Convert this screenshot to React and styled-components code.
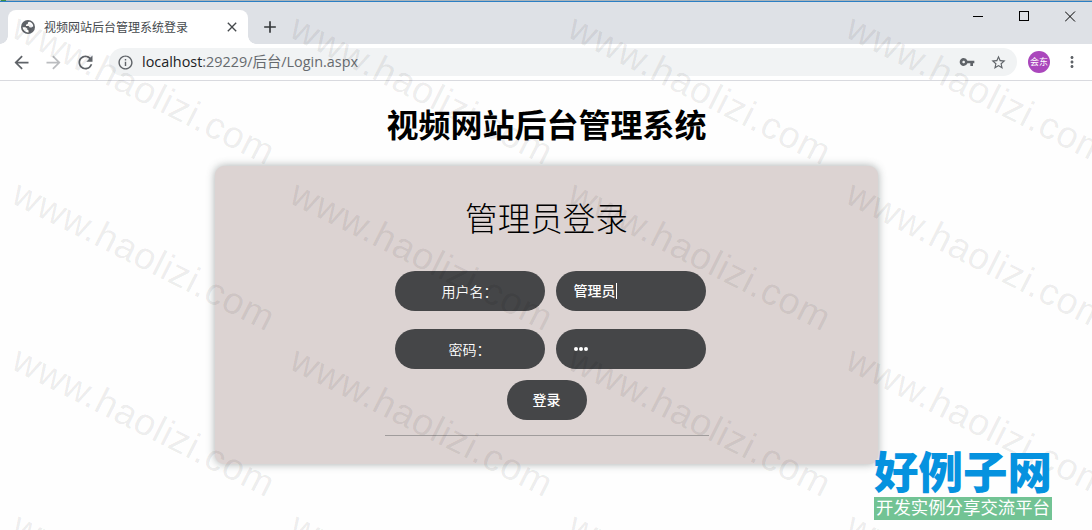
import styled, { createGlobalStyle } from "styled-components";
import {
  MdClose,
  MdAdd,
  MdArrowBack,
  MdArrowForward,
  MdRefresh,
  MdInfoOutline,
  MdVpnKey,
  MdStarBorder,
  MdMoreVert,
} from "react-icons/md";

const GlobalStyle = createGlobalStyle`
  * {
    box-sizing: border-box;
  }

  body {
    margin: 0;
    background: #fefefe;
    font-family: "Noto Sans CJK SC", sans-serif;
  }

  svg {
    display: block;
    flex: none;
  }
`;

const Window = styled.div`
  position: relative;
  width: 1092px;
  height: 530px;
  overflow: hidden;
  display: flex;
  flex-direction: column;
`;

const TopEdge = styled.div`
  height: 2px;
  flex: none;
  border-top: 1px solid #a9b3ba;
  background: #2b7fc4;

  &::before {
    content: "";
    display: block;
    width: 5px;
    height: 1px;
    margin: -1px 0 0 1px;
    background: #3f9142;
  }
`;

const TabStrip = styled.div`
  display: flex;
  flex: none;
  height: 42px;
  padding: 8px 0 0 8px;
  background: #dee1e6;
`;

const Tab = styled.div`
  position: relative;
  display: flex;
  align-items: center;
  width: 240px;
  height: 34px;
  padding: 0 8px 0 13px;
  border-radius: 8px 8px 0 0;
  background: #fff;
  color: #45494d;
  font-size: 12px;

  span {
    flex: 1;
    margin-left: 9px;
    line-height: 16px;
  }

  &::before,
  &::after {
    content: "";
    position: absolute;
    bottom: 0;
    width: 8px;
    height: 8px;
  }

  &::before {
    left: -8px;
    background: radial-gradient(circle at 0 0, transparent 7.5px, #fff 8px);
  }

  &::after {
    right: -8px;
    background: radial-gradient(circle at 100% 0, transparent 7.5px, #fff 8px);
  }
`;

const NewTab = styled.div`
  width: 20px;
  margin: 7px 0 0 12px;
  color: #35383b;
`;

const Controls = styled.div`
  display: flex;
  gap: 35px;
  margin: 1px 16px 0 auto;
`;

const Toolbar = styled.div`
  display: flex;
  flex: none;
  align-items: center;
  height: 37px;
  padding: 0 11px 0 11px;
  border-bottom: 1px solid #d9dadf;
  background: #fff;
  color: #5f6368;
`;

const NavIcons = styled.div`
  display: flex;
  gap: 11px;

  .disabled {
    color: #bbbdc0;
  }
`;

const AddressBar = styled.div`
  display: flex;
  align-items: center;
  flex: 1;
  height: 28px;
  margin-left: 13px;
  padding: 0 10px 0 8px;
  border-radius: 14px;
  background: #f1f3f4;
`;

const Url = styled.div`
  flex: 1;
  margin-left: 8px;
  font-family: "Open Sans", "Noto Sans CJK SC", sans-serif;
  font-size: 14.4px;
  line-height: 20px;
  color: #666a6e;

  b {
    font-weight: 400;
    color: #202124;
  }
`;

const BarIcons = styled.div`
  display: flex;
  align-items: center;
  gap: 15px;
`;

const Avatar = styled.div`
  width: 22px;
  height: 22px;
  margin: 0 13px 0 11px;
  border-radius: 50%;
  background: #aa47bc;
  color: #fff;
  font-size: 9px;
  line-height: 22px;
  text-align: center;
`;

const Page = styled.main`
  display: flex;
  flex-direction: column;
  align-items: center;
  padding-left: 1px;
`;

const PageTitle = styled.h1`
  margin: 20px 0 0;
  font-size: 32px;
  line-height: 44px;
  color: #000;
`;

const Panel = styled.section`
  display: flex;
  flex-direction: column;
  align-items: center;
  width: 663px;
  height: 298px;
  margin-top: 21px;
  padding-top: 28px;
  border-radius: 9px;
  background: #dcd3d2;
  box-shadow: 0 0 8px rgba(60, 70, 70, 0.45);
`;

const PanelTitle = styled.h2`
  margin: 0;
  font-size: 32.6px;
  font-weight: 300;
  line-height: 46px;
  color: #000;
`;

const Fields = styled.div`
  display: grid;
  grid-template-columns: 150px 150px;
  gap: 18px 11px;
  margin: 31px 0 0 7px;
`;

const Pill = styled.div`
  display: flex;
  align-items: center;
  justify-content: center;
  height: 40px;
  padding-bottom: 2px;
  border-radius: 20px;
  background: #454648;
  color: #fff;
  font-size: 14px;
`;

const Label = styled(Pill)`
  padding-bottom: 0;
  font-weight: 350;
`;

const Field = styled(Pill)`
  justify-content: flex-start;
  padding-left: 18px;
  font-weight: 500;
`;

const Caret = styled.i`
  width: 1px;
  height: 16px;
  margin-top: 2px;
  background: #fff;
`;

const Dot = styled.i`
  width: 4px;
  height: 4px;
  margin: 2px 1px 0 0;
  border-radius: 50%;
  background: #fff;
`;

const LoginButton = styled(Pill).attrs({ as: "button" })`
  width: 80px;
  margin-top: 11px;
  padding: 0 0 2px;
  border: 0;
  font-family: inherit;
  font-weight: 500;
`;

const Line = styled.hr`
  width: 324px;
  height: 1px;
  margin: 15px 0 0;
  border: 0;
  background: #a09c9c;
`;

// 水印铺满整个窗口，盖在所有内容上面
const Watermarks = styled.div`
  position: absolute;
  top: 0;
  left: 10px;
  display: grid;
  grid-template-columns: repeat(4, 278px);
  grid-auto-rows: 166px;
  pointer-events: none;
`;

const Mark = styled.span`
  width: 0;
  height: 34px;
  font-family: "Liberation Sans", Arial, sans-serif;
  font-size: 37.5px;
  letter-spacing: 0.75px;
  line-height: 34px;
  white-space: nowrap;
  color: rgba(0, 0, 0, 0.075);
  transform: translateY(6px) rotate(26.8deg);
  transform-origin: 0 29px;
`;

const SiteLogo = styled.div`
  position: absolute;
  top: 448px;
  left: 874px;
  width: 178px;

  strong {
    display: block;
    height: 49px;
    font-size: 44.5px;
    font-weight: 900;
    line-height: 44px;
    white-space: nowrap;
    color: #0592df;
  }

  span {
    display: block;
    height: 23px;
    background: #72c394;
    color: #fff;
    font-size: 17.4px;
    line-height: 20px;
    text-align: center;
    white-space: nowrap;
  }
`;

function GlobeIcon() {
  return (
    <svg width="14" height="14" viewBox="0 0 14 14">
      <circle cx="7" cy="7" r="7" fill="#5f6368" />
      <path
        d="M8.3 1.8C7 2.2 6.6 3 6.9 3.9L5.2 4.6 4.9 6H7.6L8.8 7.5H10.4L12.3 6.2A5.5 5.5 0 0 0 8.3 1.8ZM1.6 7.2H4.4L6.3 8.4V9.8L7.6 10.4V12.4A5.5 5.5 0 0 1 1.6 7.2Z"
        fill="#fff"
      />
    </svg>
  );
}

function WindowControls() {
  return (
    <Controls>
      <svg width="11" height="11" stroke="#000">
        <path d="M0 5.5h10" />
      </svg>
      <svg width="11" height="11" stroke="#000" fill="none">
        <rect x="0.5" y="0.5" width="9" height="9" />
      </svg>
      <svg width="11" height="11" stroke="#000">
        <path d="M0 0.5l10 10M10 0.5l-10 10" />
      </svg>
    </Controls>
  );
}

function App() {
  return (
    <>
      <GlobalStyle />
      <Window>
        <TopEdge />
        <TabStrip>
          <Tab>
            <GlobeIcon />
            <span>视频网站后台管理系统登录</span>
            <MdClose size={16} />
          </Tab>
          <NewTab>
            <MdAdd size={20} />
          </NewTab>
          <WindowControls />
        </TabStrip>
        <Toolbar>
          <NavIcons>
            <MdArrowBack size={21} />
            <MdArrowForward size={21} className="disabled" />
            <MdRefresh size={21} />
          </NavIcons>
          <AddressBar>
            <MdInfoOutline size={17} />
            <Url>
              <b>localhost</b>:29229/后台/Login.aspx
            </Url>
            <BarIcons>
              <MdVpnKey size={16} />
              <MdStarBorder size={17} />
            </BarIcons>
          </AddressBar>
          <Avatar>会东</Avatar>
          <MdMoreVert size={18} />
        </Toolbar>
        <Page>
          <PageTitle>视频网站后台管理系统</PageTitle>
          <Panel>
            <PanelTitle>管理员登录</PanelTitle>
            <Fields>
              <Label>用户名：</Label>
              <Field>
                管理员
                <Caret />
              </Field>
              <Label>密码：</Label>
              <Field>
                <Dot />
                <Dot />
                <Dot />
              </Field>
            </Fields>
            <LoginButton>登录</LoginButton>
            <Line />
          </Panel>
        </Page>
        <Watermarks>
          {Array.from({ length: 16 }, (_, i) => (
            <Mark key={i}>www.haolizi.com</Mark>
          ))}
        </Watermarks>
        <SiteLogo>
          <strong>好例子网</strong>
          <span>开发实例分享交流平台</span>
        </SiteLogo>
      </Window>
    </>
  );
}

export default App;
